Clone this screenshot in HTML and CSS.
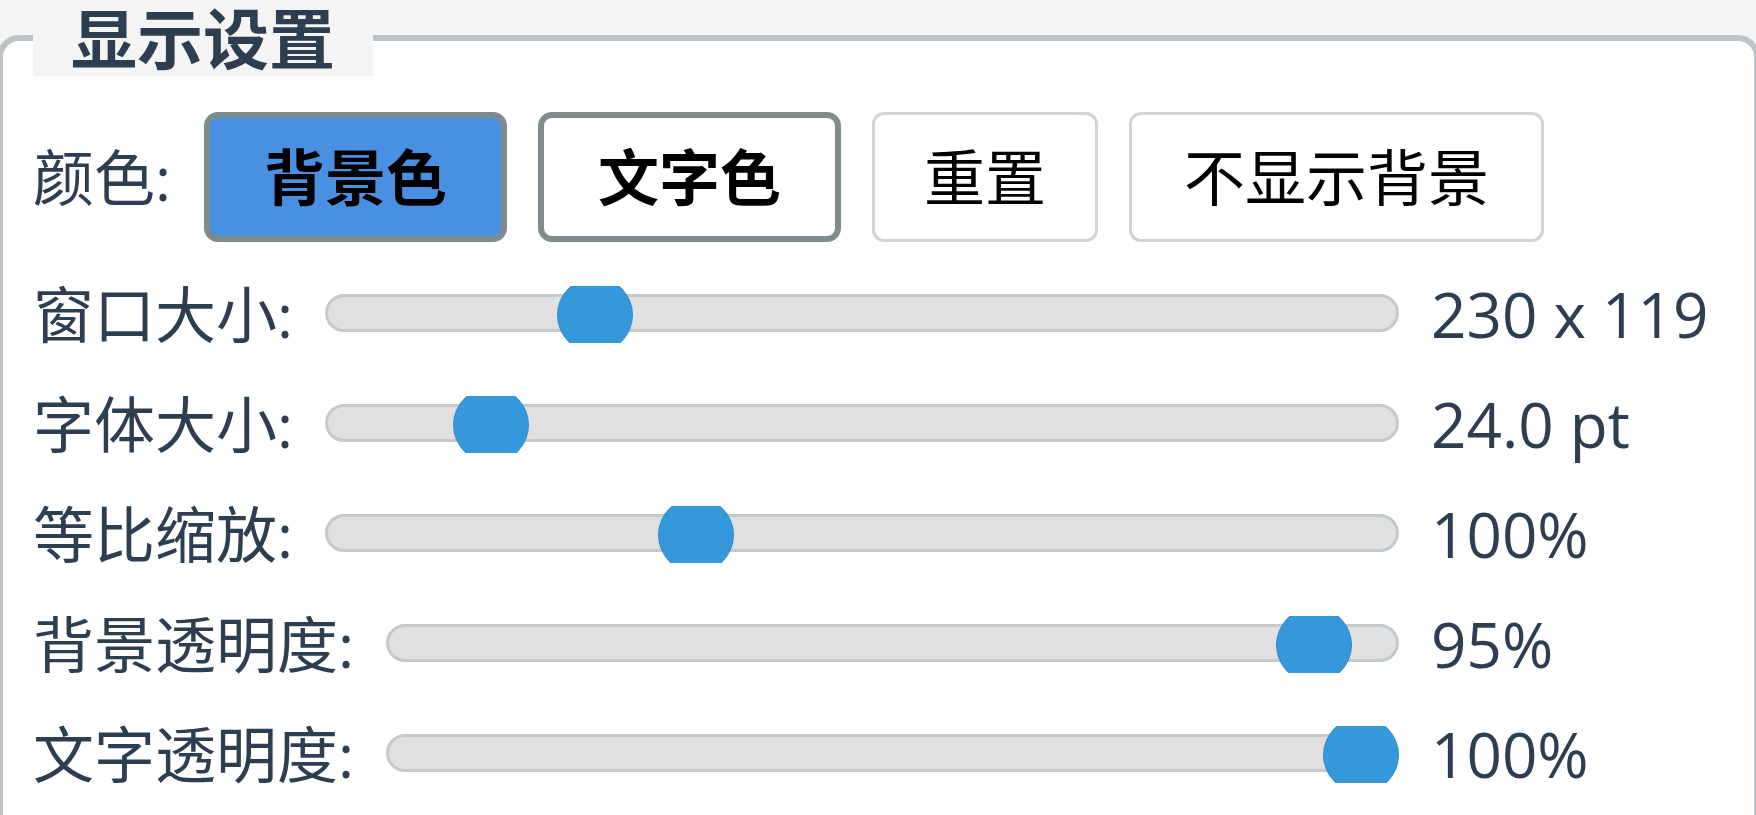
FILE: index.html
```html
<!DOCTYPE html>
<html lang="zh-CN">
<head>
    <meta charset="UTF-8">
    <meta name="viewport" content="width=device-width, initial-scale=1.0">
    <title>显示设置</title>
    <link rel="stylesheet" href="styles.css">
</head>
<body>
    <!-- 显示设置面板 -->
    <fieldset class="panel">
        <legend class="panel-title">显示设置</legend>

        <!-- 颜色按钮 -->
        <div class="color-row">
            <span class="label">颜色:</span>
            <div class="btn-group">
                <button class="btn btn-picked btn-bg">背景色</button>
                <button class="btn btn-picked">文字色</button>
                <button class="btn btn-reset">重置</button>
                <button class="btn">不显示背景</button>
            </div>
        </div>

        <!-- 滑块 --v 为当前值所占比例 -->
        <div class="slider-row">
            <span class="label">窗口大小:</span>
            <div class="slider"><div class="track"></div><div class="thumb" style="--v:0.232"></div></div>
            <span class="value">230 x 119</span>
        </div>
        <div class="slider-row">
            <span class="label">字体大小:</span>
            <div class="slider"><div class="track"></div><div class="thumb" style="--v:0.128"></div></div>
            <span class="value">24.0 pt</span>
        </div>
        <div class="slider-row">
            <span class="label">等比缩放:</span>
            <div class="slider"><div class="track"></div><div class="thumb" style="--v:0.334"></div></div>
            <span class="value">100%</span>
        </div>
        <div class="slider-row">
            <span class="label">背景透明度:</span>
            <div class="slider"><div class="track"></div><div class="thumb" style="--v:0.95"></div></div>
            <span class="value">95%</span>
        </div>
        <div class="slider-row">
            <span class="label">文字透明度:</span>
            <div class="slider"><div class="track"></div><div class="thumb" style="--v:1"></div></div>
            <span class="value">100%</span>
        </div>
    </fieldset>
</body>
</html>
```

FILE: styles.css
```css
* {
    margin: 0;
    padding: 0;
    box-sizing: border-box;
}

body {
    background-color: #f4f4f4;
    font-family: "Open Sans", "Noto Sans CJK SC", sans-serif;
    color: #2c3e50;
    overflow: hidden;
}

/* 外框 */
.panel {
    margin: 0 -4px 0 -3px;
    border: 6px solid #bdc3c7;
    border-radius: 22px;
    background-color: #fff;
    padding: 44px 30px 0;
    min-height: 900px;
}

.panel-title {
    font-size: 66px;
    font-weight: 700;
    line-height: 76px;
    padding: 0 38px;
    margin-bottom: -8px;
    background-color: #f4f4f4;
}

.label {
    font-size: 61px;
    line-height: 1;
    white-space: nowrap;
}

/* 颜色按钮 */
.color-row {
    display: flex;
    align-items: center;
    gap: 33px;
    height: 130px;
}

.btn-group {
    display: flex;
    gap: 31px;
}

.btn {
    height: 130px;
    padding: 0 52px;
    border: 3px solid #cfd4d8;
    border-radius: 12px;
    background-color: #fff;
    color: #000;
    font-family: inherit;
    font-size: 61px;
    line-height: 1;
}

.btn-picked {
    padding: 0 54px;
    border: 6px solid #7f8c8d;
    border-radius: 14px;
    font-weight: 700;
}

.btn-reset {
    padding: 0 49px;
}

.btn-bg {
    background-color: #4a90e2;
}

/* 滑块 */
.slider-row {
    display: flex;
    align-items: center;
    gap: 32px;
    height: 110px;
}

.color-row + .slider-row {
    margin-top: 17px;
}

.slider {
    flex: 1;
    position: relative;
    height: 57px;
    overflow: hidden;
}

.track {
    height: 38px;
    margin-top: 8px;
    border: 3px solid #c3c9cd;
    border-radius: 19px;
    background-color: #e0e0e0;
}

.thumb {
    position: absolute;
    top: -9px;
    left: calc((100% - 76px) * var(--v));
    width: 76px;
    height: 76px;
    border: 1px solid #2e8bcc;
    border-radius: 50%;
    background-color: #3498db;
}

.value {
    width: 293px;
    flex-shrink: 0;
    font-size: 62px;
    line-height: 1;
    white-space: nowrap;
}
```
